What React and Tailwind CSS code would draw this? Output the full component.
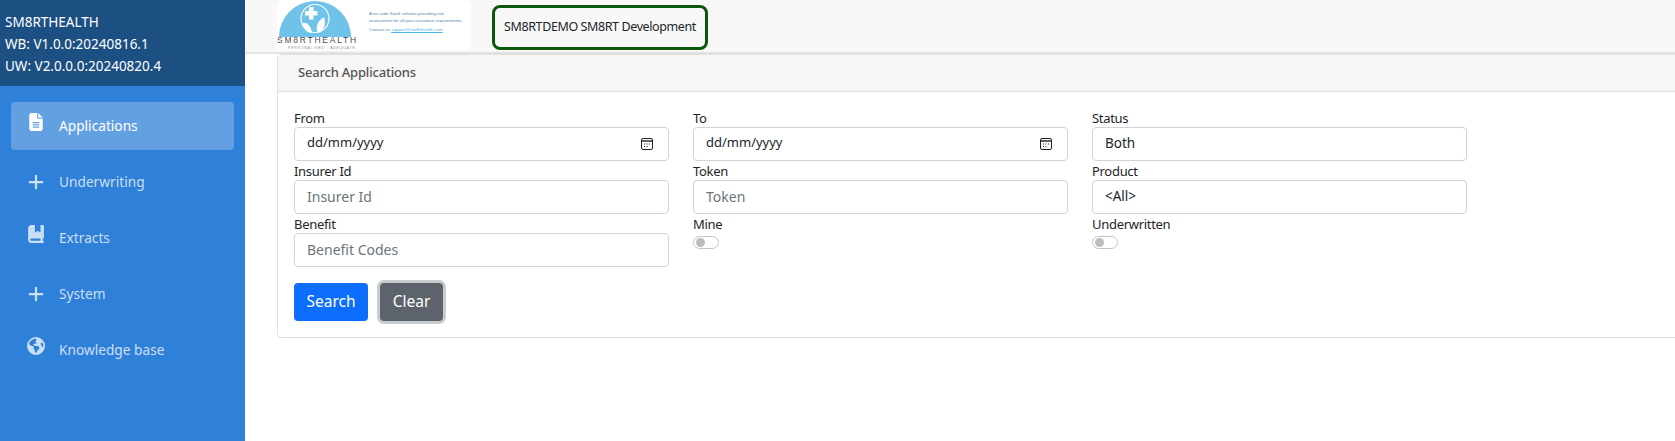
import { FaFileLines, FaPlus, FaBookBookmark, FaEarthAmericas } from 'react-icons/fa6';

const navItems = [
  { label: 'Applications', icon: FaFileLines, active: true, lift: true },
  { label: 'Underwriting', icon: FaPlus },
  { label: 'Extracts', icon: FaBookBookmark, lift: true },
  { label: 'System', icon: FaPlus },
  { label: 'Knowledge base', icon: FaEarthAmericas, lift: true },
];

const CalendarIcon = () => (
  <svg width="12" height="12" viewBox="0 0 12 12" fill="none" className="shrink-0">
    <rect x="0.5" y="0.5" width="11" height="11" rx="1.5" stroke="#222" />
    <path d="M1 3h10" stroke="#222" strokeWidth="1.4" />
    <path d="M3 6h1M5.5 6h1M8 6h1M3 8.5h1M5.5 8.5h1" stroke="#222" />
  </svg>
);

const Logo = () => (
  <div className="w-[194px] h-[50px] bg-white rounded-md flex overflow-hidden">
    <svg width="86" height="50" viewBox="0 0 86 50" className="shrink-0">
      <path d="M2 37a36 36 0 0 1 72 0z" fill="#6fc3e8" />
      <circle cx="38" cy="18.5" r="14" fill="none" stroke="#fff" strokeWidth="1.2" />
      <path d="M32 7h4.5v4h4v4.5h-4v4H32v-4h-4V11h4z" fill="#fff" />
      <path d="M26 23c3-1 8 2 9 10-5 0-9-4-9-10z" fill="#fff" />
      <path d="M47 17c2 6 1 13-6 16-3-5-1-12 6-16z" fill="#fff" />
      <text x="0" y="43" fontSize="8.5" letterSpacing="1.75" fill="#4b4b4b" fontFamily="Liberation Sans, sans-serif">SM8RTHEALTH</text>
      <text x="11" y="48.5" fontSize="3.5" letterSpacing="0.8" fill="#8a8a8a" fontFamily="Liberation Sans, sans-serif">PERSONALISED · ADEQUATE</text>
    </svg>
    <div className="pl-[6px] pt-[11px] text-[4.4px] leading-[6.5px] text-[#4f86b5] font-['Liberation_Sans',sans-serif] whitespace-nowrap">
      <p>A no code SaaS solution providing risk</p>
      <p>assessment for all your insurance requirements.</p>
      <p className="mt-[3px]">
        Contact us <span className="text-[#4db4e8] underline">support@sm8rthealth.com</span>
      </p>
    </div>
  </div>
);

const Label = ({ children }) => (
  <label className="block h-[19px] pt-[1px] leading-[19px] text-[13px] tracking-[-0.3px] text-[#212529]">{children}</label>
);

const boxClass = 'h-[34px] w-full rounded-[4px] border border-[#ced4da] bg-white px-3 flex items-center';

const TextField = ({ label, placeholder }) => (
  <div>
    <Label>{label}</Label>
    <input
      className={`${boxClass} pb-[2px] text-[14px] outline-none placeholder:text-[#6c757d]`}
      placeholder={placeholder}
      readOnly
    />
  </div>
);

const DateField = ({ label }) => (
  <div>
    <Label>{label}</Label>
    <div className={`${boxClass} justify-between text-[13px] text-[#212529] pr-[15px]`}>
      <span className="-mt-[2px]">dd/mm/yyyy</span>
      <CalendarIcon />
    </div>
  </div>
);

const SelectField = ({ label, value }) => (
  <div>
    <Label>{label}</Label>
    <div className={`${boxClass} pb-[2px] text-[13.5px] text-[#212529]`}>{value}</div>
  </div>
);

const Toggle = ({ label }) => (
  <div>
    <Label>{label}</Label>
    <div className="mt-[3px] w-[26px] h-[13px] rounded-full border border-[#c4c4c4] bg-white flex items-center pl-[2px]">
      <div className="w-[9px] h-[9px] rounded-full bg-[#bdbdbd]" />
    </div>
  </div>
);

export default function App() {
  return (
    <div className="flex h-[441px] w-[1675px] overflow-hidden bg-white font-['Noto_Sans',sans-serif]">
      <aside className="w-[245px] shrink-0 bg-[#2f80d8] flex flex-col">
        <div className="h-[86px] bg-[#1c4f82] pl-[5px] pt-[11px] text-[13.5px] leading-[22px] text-white">
          <div>SM8RTHEALTH</div>
          <div>WB: V1.0.0:20240816.1</div>
          <div>UW: V2.0.0.0:20240820.4</div>
        </div>
        <nav className="pt-4 px-[11px] flex flex-col gap-2">
          {navItems.map(({ label, icon: Icon, active, lift }) => (
            <a
              key={label}
              className={`h-[48px] rounded-[4px] pl-4 flex items-center text-[13.7px] ${
                active ? 'bg-white/25 text-white' : 'text-white/75'
              }`}
            >
              <span className={`w-[32px] ${lift ? '-mt-2' : ''}`}>
                <Icon className="h-[18px] w-auto" />
              </span>
              <span>{label}</span>
            </a>
          ))}
        </nav>
      </aside>

      <main className="flex-1 min-w-0">
        <div className="h-[54px] bg-[#f8f8f8] border-b-2 border-[#e2e2e2] pl-[32px] flex items-start gap-[21px]">
          <Logo />
          <div className="mt-[5px] h-[45px] w-[216px] rounded-[8px] border-[3px] border-[#0b5a0b] flex items-center justify-center text-[12.5px] tracking-[-0.4px] text-[#212529] whitespace-nowrap">
            SM8RTDEMO SM8RT Development
          </div>
        </div>

        <div className="ml-[32px] -mr-[10px] h-[284px] rounded-l-[4px] border border-[#dfdfdf]">
          <div className="h-[37px] bg-[#f7f7f7] border-b border-[#dfdfdf] pl-[20px] flex items-center text-[13px] font-medium tracking-[-0.2px] text-[#555]">
            Search Applications
          </div>
          <div className="pl-[16px] pt-[16px]">
            <div className="grid grid-cols-[375px_375px_375px] gap-x-[24px]">
              <DateField label="From" />
              <DateField label="To" />
              <SelectField label="Status" value="Both" />
              <TextField label="Insurer Id" placeholder="Insurer Id" />
              <TextField label="Token" placeholder="Token" />
              <SelectField label="Product" value="<All>" />
              <TextField label="Benefit" placeholder="Benefit Codes" />
              <Toggle label="Mine" />
              <Toggle label="Underwritten" />
            </div>
            <div className="mt-4 flex gap-3 items-center">
              <button className="h-[38px] w-[74px] rounded-[4px] bg-[#0d6efd] text-white text-[15.5px]">Search</button>
              <button className="h-[38px] w-[63px] rounded-[4px] bg-[#5c636a] text-white text-[15.5px] ring-[3px] ring-[#c9cccf]">
                Clear
              </button>
            </div>
          </div>
        </div>
      </main>
    </div>
  );
}
